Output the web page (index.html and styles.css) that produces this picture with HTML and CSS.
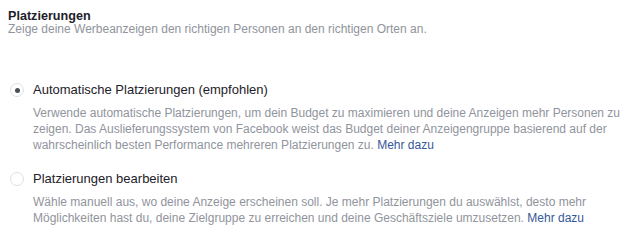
FILE: index.html
```html
<!DOCTYPE html>
<html lang="de">
<head>
<meta charset="utf-8">
<title>Platzierungen</title>
<link rel="stylesheet" href="styles.css">
</head>
<body>
<section class="placements">
  <header class="placements-header">
    <h2 class="placements-title">Platzierungen</h2>
    <p class="placements-subtitle">Zeige deine Werbeanzeigen den richtigen Personen an den richtigen Orten an.</p>
  </header>
  <div class="options">
    <div class="option">
      <div class="option-row">
        <span class="radio radio-checked"></span>
        <span class="option-label">Automatische Platzierungen (empfohlen)</span>
      </div>
      <p class="option-desc">Verwende automatische Platzierungen, um dein Budget zu maximieren und deine Anzeigen mehr Personen zu zeigen. Das Auslieferungssystem von Facebook weist das Budget deiner Anzeigengruppe basierend auf der wahrscheinlich besten Performance mehreren Platzierungen zu. <a class="link" href="#">Mehr dazu</a></p>
    </div>
    <div class="option">
      <div class="option-row">
        <span class="radio"></span>
        <span class="option-label">Platzierungen bearbeiten</span>
      </div>
      <p class="option-desc">Wähle manuell aus, wo deine Anzeige erscheinen soll. Je mehr Platzierungen du auswählst, desto mehr Möglichkeiten hast du, deine Zielgruppe zu erreichen und deine Geschäftsziele umzusetzen. <a class="link" href="#">Mehr dazu</a></p>
    </div>
  </div>
</section>
</body>
</html>
```

FILE: styles.css
```css
html, body {
  margin: 0;
  padding: 0;
  background: #ffffff;
}

body {
  font-family: "Liberation Sans", Arial, Helvetica, sans-serif;
  font-size: 12px;
  color: #1d2129;
}

.placements {
  padding: 9px 8px 0 8px;
}

.placements-title {
  margin: 0;
  font-size: 12.6px;
  line-height: 14px;
  font-weight: bold;
  color: #1d2129;
}

.placements-subtitle {
  margin: 0;
  font-size: 12px;
  line-height: 12px;
  color: #90949c;
}

.options {
  margin-top: 47px;
  display: flex;
  flex-direction: column;
  gap: 18px;
}

.option-row {
  display: flex;
  align-items: center;
  gap: 9px;
  padding-left: 2px;
  height: 16px;
}

.radio {
  box-sizing: border-box;
  width: 14px;
  height: 14px;
  border: 1px solid #dddfe2;
  border-radius: 50%;
  background: #ffffff;
  display: flex;
  align-items: center;
  justify-content: center;
  flex: none;
}

.radio-checked::after {
  content: "";
  width: 5px;
  height: 5px;
  border-radius: 50%;
  background: #4b4f56;
}

.option-label {
  font-size: 13px;
  line-height: 16px;
  color: #1d2129;
}

.option-desc {
  margin: 7px 0 0 25px;
  font-size: 12px;
  line-height: 16px;
  color: #90949c;
}

.link {
  color: #365899;
  text-decoration: none;
}
```
